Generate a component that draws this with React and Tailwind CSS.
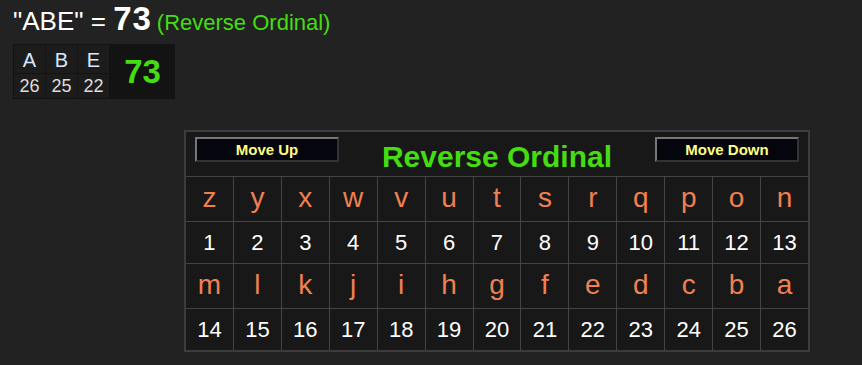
import React from 'react';

const LETTERS = 'zyxwvutsrqponmlkjihgfedcba'.split('');
const WORD = [
  { ch: 'A', val: 26 },
  { ch: 'B', val: 25 },
  { ch: 'E', val: 22 },
];

function MoveButton({ label }) {
  return (
    <button className="w-[144px] h-[25px] bg-[#05050d] border-2 border-t-[#777] border-l-[#777] border-b-[#333] border-r-[#333] text-[#ffff80] text-[15px] font-bold leading-none">
      {label}
    </button>
  );
}

function LetterRow({ items, start }) {
  return (
    <>
      {items.map((ch) => (
        <div key={ch} className="h-[44px] bg-[#181818] flex items-center justify-center text-[28px] leading-none text-[#f08050] pb-[3px]">
          {ch}
        </div>
      ))}
      {items.map((ch, i) => (
        <div key={ch + 'n'} className="h-[41px] bg-[#181818] flex items-center justify-center text-[22px] leading-none text-white">
          {start + i}
        </div>
      ))}
    </>
  );
}

export default function App() {
  return (
    <div className="min-h-screen bg-[#222222] font-['Liberation_Sans',Arial,sans-serif]">
      {/* Heading */}
      <div className="flex items-baseline pl-[13px] h-[36px]">
        <span className="text-[26px] leading-none text-white">"ABE" =&nbsp;</span>
        <span className="text-[33px] leading-[37px] font-bold text-white tracking-[1px]">73</span>
        <span className="text-[22px] leading-none text-[#44dd11] ml-[5px]">(Reverse Ordinal)</span>
      </div>

      {/* Word breakdown */}
      <div className="ml-[13px] mt-[8px] inline-flex bg-[#131313]">
        <div className="grid grid-cols-[31px_31px_31px] gap-px p-px">
          {WORD.map((w) => (
            <div key={w.ch} className="h-[28px] bg-[#1c1c1c] flex items-end justify-center text-[20px] text-[#d8e8ff] leading-none pb-[3px]">
              {w.ch}
            </div>
          ))}
          {WORD.map((w) => (
            <div key={w.ch + 'v'} className="h-[24px] bg-[#1c1c1c] flex items-center justify-center text-[18px] text-[#dddddd]">
              {w.val}
            </div>
          ))}
        </div>
        <div className="w-[65px] flex items-center justify-center text-[33px] font-bold text-[#44dd11]">73</div>
      </div>

      {/* Cipher chart */}
      <div className="ml-[184px] mt-[31px] w-[626px] border-2 border-[#3c3c3c] bg-[#181818]">
        <div className="h-[45px] flex items-start justify-between px-[9px] pt-[5px] border-b border-[#444]">
          <MoveButton label="Move Up" />
          <div className="text-[30px] font-bold text-[#44dd11] leading-none mt-[5px]">Reverse Ordinal</div>
          <MoveButton label="Move Down" />
        </div>
        <div className="grid grid-cols-[repeat(13,minmax(0,1fr))] gap-px bg-[#444]">
          <LetterRow items={LETTERS.slice(0, 13)} start={1} />
          <LetterRow items={LETTERS.slice(13)} start={14} />
        </div>
      </div>
    </div>
  );
}
